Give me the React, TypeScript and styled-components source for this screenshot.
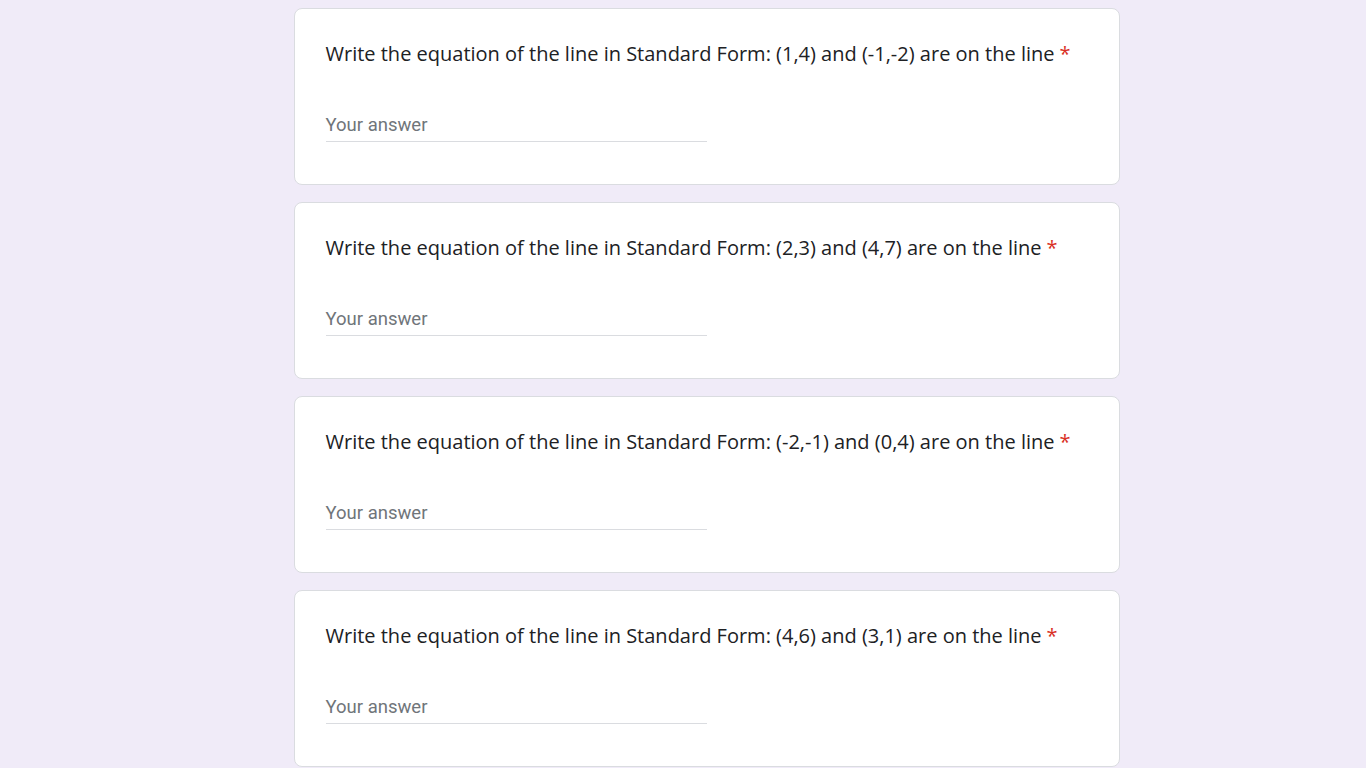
import React from "react";
import styled, { createGlobalStyle } from "styled-components";

const Global = createGlobalStyle`
  html, body { margin: 0; padding: 0; background: #f0ebf8; }
  body { font-family: Roboto, "Noto Sans", sans-serif; }
`;

const Page = styled.div`
  display: flex;
  flex-direction: column;
  align-items: center;
  gap: 17px;
  padding-top: 8px;
  padding-left: 47px;
`;

const Card = styled.div`
  box-sizing: border-box;
  width: 826px;
  background: #fff;
  border: 1px solid #dadce0;
  border-radius: 8px;
  padding: 33px 31px 42px;
  display: flex;
  flex-direction: column;
  gap: 47px;
`;

const Title = styled.div`
  font-family: "Open Sans", Roboto, sans-serif;
  font-size: 20px;
  line-height: 24px;
  color: #202124;
`;

const Star = styled.span`
  color: #d93025;
  margin-left: 5px;
`;

const Field = styled.div`
  width: 381px;
  border-bottom: 1px solid #dadce0;
  padding-bottom: 4px;
  font-family: Roboto, sans-serif;
  font-size: 18.5px;
  line-height: 24px;
  color: #70757a;
`;

const questions = [
  "(1,4) and (-1,-2)",
  "(2,3) and (4,7)",
  "(-2,-1) and (0,4)",
  "(4,6) and (3,1)",
];

export default function App() {
  return (
    <>
      <Global />
      <Page>
        {questions.map((q) => (
          <Card key={q}>
            <Title>
              Write the equation of the line in Standard Form: {q} are on the line
              <Star>*</Star>
            </Title>
            <Field>Your answer</Field>
          </Card>
        ))}
      </Page>
    </>
  );
}
